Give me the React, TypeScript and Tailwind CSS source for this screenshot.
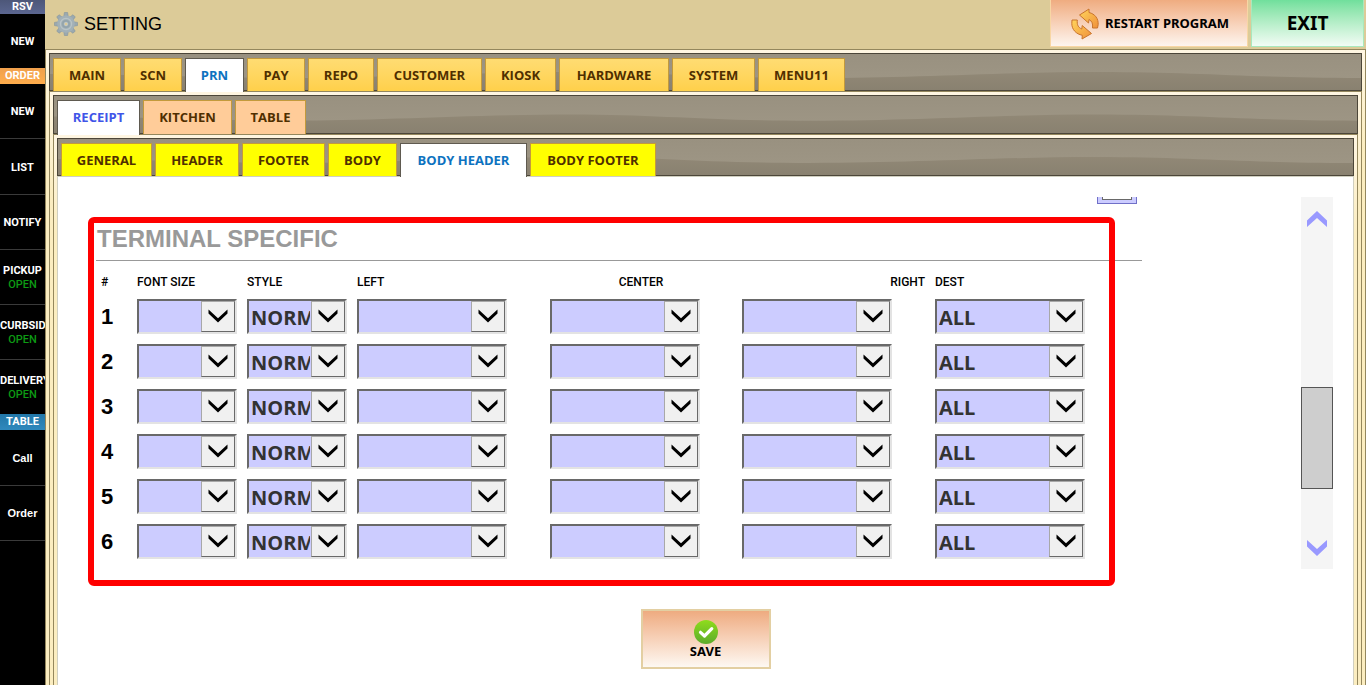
import { useState, type ReactNode } from 'react';
import { clsx } from 'clsx';

type TabItem = { label: string; width: string };

const MAIN_TABS: TabItem[] = [
  { label: 'MAIN', width: 'w-[68px]' },
  { label: 'SCN', width: 'w-[58px]' },
  { label: 'PRN', width: 'w-[59px]' },
  { label: 'PAY', width: 'w-[58px]' },
  { label: 'REPO', width: 'w-[66px]' },
  { label: 'CUSTOMER', width: 'w-[105px]' },
  { label: 'KIOSK', width: 'w-[71px]' },
  { label: 'HARDWARE', width: 'w-[110px]' },
  { label: 'SYSTEM', width: 'w-[83px]' },
  { label: 'MENU11', width: 'w-[87px]' },
];

const PRN_TABS: TabItem[] = [
  { label: 'RECEIPT', width: 'w-[83px]' },
  { label: 'KITCHEN', width: 'w-[89px]' },
  { label: 'TABLE', width: 'w-[71px]' },
];

const RECEIPT_TABS: TabItem[] = [
  { label: 'GENERAL', width: 'w-[91px]' },
  { label: 'HEADER', width: 'w-[84px]' },
  { label: 'FOOTER', width: 'w-[83px]' },
  { label: 'BODY', width: 'w-[69px]' },
  { label: 'BODY HEADER', width: 'w-[127px]' },
  { label: 'BODY FOOTER', width: 'w-[126px]' },
];

const ROWS = [1, 2, 3, 4, 5, 6];

function GearIcon() {
  return (
    <svg viewBox="0 0 24 24" className="size-6" aria-hidden="true">
      <g fill="#9aa9b0" stroke="#84949c" strokeWidth="0.6">
        {[0, 45, 90, 135].map((deg) => (
          <path key={deg} d="M9.8 4.5 10.4.5h3.2l.6 4v15l-.6 4h-3.2l-.6-4z" transform={`rotate(${deg} 12 12)`} />
        ))}
      </g>
      <circle cx="12" cy="12" r="8.8" fill="#a3b1b7" />
      <circle cx="12" cy="12" r="5.6" fill="none" stroke="#b9c4c7" strokeWidth="1.2" />
      <circle cx="12" cy="12" r="4" fill="#93a4ac" />
      <circle cx="12" cy="12" r="1.8" fill="#dccb98" stroke="#c3cdd0" strokeWidth="0.8" />
    </svg>
  );
}

function RestartIcon() {
  return (
    <svg viewBox="0 0 28 32" className="h-8 w-7 shrink-0" aria-hidden="true">
      <defs>
        <linearGradient id="arrow" x1="0" y1="0" x2="1" y2="1">
          <stop offset="0" stopColor="#ffd45c" />
          <stop offset="1" stopColor="#f0913a" />
        </linearGradient>
      </defs>
      <g fill="url(#arrow)" stroke="#c9742c" strokeWidth="1" strokeLinejoin="round">
        <path d="M8.500 7 18 1v3.500c6 1.500 9.500 6 9.200 12l-.7 3.500h-5c.5-4.500-.5-7-3.500-8.500l-.5 3.500z" />
        <path d="M20.500 25.500 11 31l.3-3.700C5 26 .8 21.500.8 15.500l.2-3.500h5.300c-.5 5 1 7.500 4.500 9l.4-3.500z" />
      </g>
    </svg>
  );
}

function CheckIcon() {
  return (
    <svg viewBox="0 0 24 24" className="size-6" aria-hidden="true">
      <defs>
        <linearGradient id="ok" x1="0" y1="0" x2="0" y2="1">
          <stop offset="0" stopColor="#8fdc1c" />
          <stop offset="1" stopColor="#5cab2c" />
        </linearGradient>
      </defs>
      <circle cx="12" cy="12" r="12" fill="url(#ok)" />
      <path d="m6.500 12.300 4 3.700 7.300-7.300" fill="none" stroke="#fff" strokeWidth="3.200" strokeLinecap="round" strokeLinejoin="round" />
    </svg>
  );
}

function ScrollArrow({ up }: { up?: boolean }) {
  return (
    <svg viewBox="0 0 20 16" className="h-4 w-5" aria-hidden="true">
      <path d={up ? 'M0 9.500 10 0l10 9.500V16L10 7 0 16z' : 'M0 0l10 9 10-9v6.500L10 16 0 6.500z'} fill="#9999ff" />
    </svg>
  );
}

function SideTitle({ className, children }: { className: string; children: string }) {
  return (
    <h2 className={clsx('overflow-hidden text-center text-[11px] font-bold whitespace-nowrap', className)}>
      {children}
    </h2>
  );
}

type SideButtonProps = { label: string; open?: boolean; height?: string; className?: string };

function SideButton({ label, open, height = 'h-[55px] border-b', className = 'pt-[2px]' }: SideButtonProps) {
  return (
    <button
      type="button"
      className={clsx(
        'flex w-full flex-col justify-center overflow-hidden border-[#3a3a3a] text-center text-[11px] leading-[14px] font-bold whitespace-nowrap text-white',
        height,
        className
      )}
    >
      <span className="w-full">{label}</span>
      {open && <span className="w-full font-medium text-[#0d9a14]">OPEN</span>}
    </button>
  );
}

function Sidebar() {
  const lower = "font-['Liberation_Sans',Arial,sans-serif]";
  return (
    <aside className="w-[45px] shrink-0 bg-black font-[Roboto,sans-serif]">
      <SideTitle className="h-[14px] bg-linear-to-b from-[#4d5779] to-[#5b6690] leading-[13px] text-white">RSV</SideTitle>
      <SideButton label="NEW" height="h-[54px]" />
      <SideTitle className="h-4 bg-linear-to-b from-[#f0a04c] to-[#ffad4c] leading-4 text-white">ORDER</SideTitle>
      <SideButton label="NEW" />
      <SideButton label="LIST" height="h-[56px] border-b" />
      <SideButton label="NOTIFY" />
      <SideButton label="PICKUP" open />
      <SideButton label="CURBSIDE" open />
      <SideButton label="DELIVERY" open height="h-[54px]" />
      <SideTitle className="h-4 bg-linear-to-b from-[#2277a8] to-[#3089bd] leading-4 text-white">TABLE</SideTitle>
      <SideButton label="Call" height="h-[56px] border-b" className={lower} />
      <SideButton label="Order" className={lower} />
    </aside>
  );
}

type TabStripProps = {
  items: TabItem[];
  value: string;
  onChange: (label: string) => void;
  tabClass: string;
  activeClass: string;
  height: string;
};

function TabStrip({ items, value, onChange, tabClass, activeClass, height }: TabStripProps) {
  return (
    <div
      className={clsx(
        'relative border border-[#4c4639] bg-linear-to-b from-[#999180] to-[#9f9786] pt-1 pl-[3px]',
        height
      )}
    >
      <svg viewBox="0 0 1310 36" preserveAspectRatio="none" className="absolute inset-0 h-full w-full" aria-hidden="true">
        <defs>
          <linearGradient id="wave" x1="0" y1="0" x2="0" y2="1">
            <stop offset="0" stopColor="#918876" />
            <stop offset="1" stopColor="#898170" />
          </linearGradient>
        </defs>
        <path
          d="M0 20C80 20 160 24 240 24S430 18 520 18s130 6 240 6 190-6 290-6 150 6 260 6v12H0z"
          fill="url(#wave)"
        />
      </svg>
      <div role="tablist" className="relative flex h-full gap-[3px]">
        {items.map((tab) => {
          const active = tab.label === value;
          return (
            <button
              key={tab.label}
              type="button"
              role="tab"
              aria-selected={active}
              onClick={() => onChange(tab.label)}
              className={clsx(
                'shrink-0 border border-b-0 text-center text-[13px] font-bold whitespace-nowrap',
                tab.width,
                active ? 'z-10 -mb-[2px] border-[#5f5a50] bg-white' : '-mb-px border-[#c39a3c] pt-px',
                active ? activeClass : tabClass
              )}
            >
              {tab.label}
            </button>
          );
        })}
      </div>
    </div>
  );
}

function Panel({ children }: { children: ReactNode }) {
  return (
    <div className="flex grow flex-col border border-b-0 border-[#94875d] bg-linear-to-b from-[#fff6e2] to-[#fbedc0] to-[100px] px-[3px] pt-[3px]">
      {children}
    </div>
  );
}

type DropDownProps = { label: string; wide?: boolean; options: string[] };

function DropDown({ label, wide, options }: DropDownProps) {
  return (
    <div className={clsx('relative h-[35px]', wide ? 'w-[150px]' : 'w-[100px]')}>
      <select
        aria-label={label}
        className="h-full w-full appearance-none rounded-none border-2 border-t-[#696969] border-r-[#e3e3e3] border-b-[#e3e3e3] border-l-[#696969] bg-[#ccccff] pt-[2px] pr-[35px] pl-[2px] text-xl leading-[28px] font-bold text-[#333333] outline-none"
      >
        {options.map((option) => (
          <option key={option}>{option}</option>
        ))}
      </select>
      <span className="pointer-events-none absolute top-[2px] right-[2px] flex h-[31px] w-[34px] items-center justify-center border border-t-[#a8a8a8] border-r-[#696969] border-b-[#696969] border-l-[#a8a8a8] bg-[#f0f0f0] pb-[2px]">
        <svg viewBox="0 0 20 14" className="h-[14px] w-5" aria-hidden="true">
          <path d="M.5.500 10 9.300 19.500.5v4L10 13.500.5 4.500z" fill="#000" />
        </svg>
      </span>
    </div>
  );
}

function TerminalTable() {
  const head = 'pr-[10px] font-medium';
  return (
    <table className="ml-[5px] w-[984px] table-fixed border-collapse">
      <colgroup>
        <col className="w-[36px]" />
        <col className="w-[110px]" />
        <col className="w-[110px]" />
        <col className="w-[193px]" />
        <col className="w-[192px]" />
        <col className="w-[193px]" />
        <col className="w-[150px]" />
      </colgroup>
      <thead>
        <tr className="h-[25px] text-left font-[Roboto,sans-serif] text-xs text-black">
          <th className={head}>#</th>
          <th className={head}>FONT SIZE</th>
          <th className={head}>STYLE</th>
          <th className={head}>LEFT</th>
          <th className={clsx(head, 'text-center')}>CENTER</th>
          <th className={clsx(head, 'text-right')}>RIGHT</th>
          <th className="font-medium">DEST</th>
        </tr>
      </thead>
      <tbody>
        {ROWS.map((n) => (
          <tr key={n} className="h-[45px]">
            <th className="text-left font-['Liberation_Sans',Arial,sans-serif] text-[22px] font-bold text-black">{n}</th>
            <td><DropDown label={`Font size ${n}`} options={['', '1', '2']} /></td>
            <td><DropDown label={`Style ${n}`} options={['NORMAL', 'BOLD']} /></td>
            <td><DropDown label={`Left ${n}`} options={['']} wide /></td>
            <td><DropDown label={`Center ${n}`} options={['']} wide /></td>
            <td><DropDown label={`Right ${n}`} options={['']} wide /></td>
            <td><DropDown label={`Destination ${n}`} options={['ALL']} wide /></td>
          </tr>
        ))}
      </tbody>
    </table>
  );
}

export default function App() {
  const [mainTab, setMainTab] = useState('PRN');
  const [prnTab, setPrnTab] = useState('RECEIPT');
  const [receiptTab, setReceiptTab] = useState('BODY HEADER');

  return (
    <div className="flex min-h-screen bg-white font-['Open_Sans','Noto_Sans',sans-serif]">
      <Sidebar />

      <main className="flex min-w-0 grow flex-col">
        <header className="flex h-[49px] items-start bg-[#dccb98] pr-[2px] pl-[9px] font-['Noto_Sans',sans-serif]">
          <div className="flex h-[47px] grow items-center gap-[6px]">
            <GearIcon />
            <h1 className="font-['Liberation_Sans',Arial,sans-serif] text-lg text-black">SETTING</h1>
          </div>
          <button
            type="button"
            className="mr-[3px] flex h-[47px] w-[198px] items-center justify-center gap-[6px] border border-t-0 border-[#f8d6a4] bg-linear-to-b from-[#efac80] to-[#fdf5ef] pt-px pl-[2px] text-[13px] font-bold text-black"
          >
            <RestartIcon />
            RESTART PROGRAM
          </button>
          <button
            type="button"
            className="h-[47px] w-[113px] border border-t-0 border-[#a9e8bd] bg-linear-to-b from-[#70df9c] to-[#f2fcf5] text-[19px] font-bold text-black"
          >
            EXIT
          </button>
        </header>

        <Panel>
          <TabStrip
            items={MAIN_TABS}
            value={mainTab}
            onChange={setMainTab}
            height="h-[38px]"
            tabClass="bg-linear-to-b from-[#ffdc72] to-[#ffd04a] text-[#4f2f00]"
            activeClass="text-[#0d72c0]"
          />
          <Panel>
            <TabStrip
              items={PRN_TABS}
              value={prnTab}
              onChange={setPrnTab}
              height="h-[39px]"
              tabClass="bg-[#ffcc99] text-[#4f2f00]"
              activeClass="text-[#3f55e8]"
            />
            <Panel>
              <TabStrip
                items={RECEIPT_TABS}
                value={receiptTab}
                onChange={setReceiptTab}
                height="h-[38px]"
                tabClass="bg-[#ffff00] text-[#4f2f00]"
                activeClass="text-[#0d72c0]"
              />

              <div className="flex grow flex-col items-center border border-b-0 border-[#d0cfc0] bg-white pt-5 pb-4">
                <div className="flex w-full pr-5 pl-[38px]">
                  <section className="relative mr-[159px] grow">
                    {/* tail of the control that is scrolled out above */}
                    <div className="mr-[5px] ml-auto h-[7px] w-10 border border-t-0 border-[#7070c8] bg-[#ccccff] px-1">
                      <div className="h-[3px] border border-t-0 border-[#696969] bg-white" />
                    </div>
                    <h2 className="mt-[22px] border-b border-[#999999] pb-2 pl-px font-['Liberation_Sans',Arial,sans-serif] text-2xl leading-[26px] font-bold text-[#999999]">
                      TERMINAL SPECIFIC
                    </h2>
                    <div className="mt-2">
                      <TerminalTable />
                    </div>
                    <div className="pointer-events-none absolute top-5 right-[27px] -bottom-[17px] -left-2 rounded-md border-6 border-[#ff0000]" />
                  </section>

                  <div className="flex h-[372px] w-8 shrink-0 flex-col items-center bg-[#f5f5f5]">
                    <button type="button" aria-label="Scroll up" className="flex h-[43px] w-full items-center justify-center">
                      <ScrollArrow up />
                    </button>
                    <div className="mt-[147px] h-[102px] w-full border border-[#555555] bg-[#cecece]" />
                    <button type="button" aria-label="Scroll down" className="mt-auto flex h-[43px] w-full items-center justify-center">
                      <ScrollArrow />
                    </button>
                  </div>
                </div>

                <button
                  type="button"
                  className="mt-10 flex h-[60px] w-[130px] flex-col items-center border-2 border-[#e3cfa2] bg-linear-to-b from-[#eeab80] to-[#fdf8f2] pt-[9px] font-['Noto_Sans',sans-serif] text-[13px] leading-[14px] font-bold text-black"
                >
                  <CheckIcon />
                  SAVE
                </button>
              </div>
            </Panel>
          </Panel>
        </Panel>
      </main>
    </div>
  );
}
